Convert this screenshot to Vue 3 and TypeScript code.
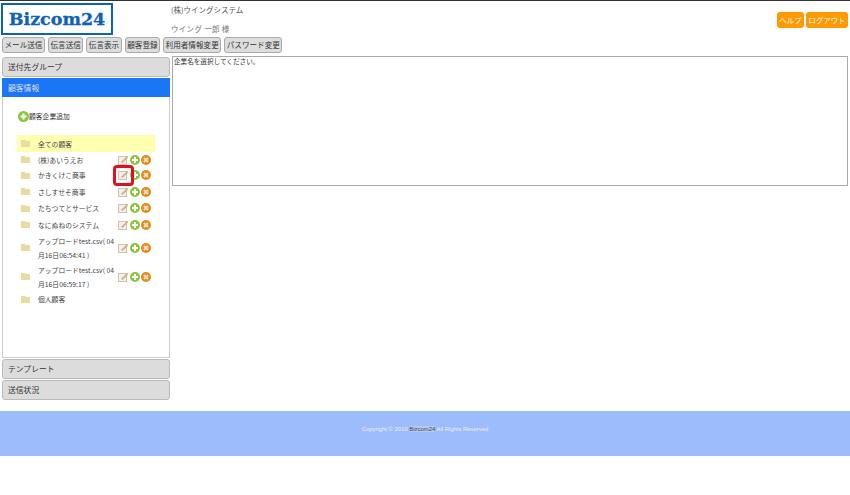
<script setup lang="ts">
interface Row { name: string; actions: boolean; h: number }
const rows: Row[] = [
  { name: '(株)あいうえお', actions: true, h: 15 },
  { name: 'かきくけこ商事', actions: true, h: 16 },
  { name: 'さしすせそ商事', actions: true, h: 17 },
  { name: 'たちつてとサービス', actions: true, h: 16 },
  { name: 'なにぬねのシステム', actions: true, h: 17 },
  { name: 'アップロードtest.csv( 04\n月16日06:54:41 )', actions: true, h: 29 },
  { name: 'アップロードtest.csv( 04\n月16日06:59:17 )', actions: true, h: 29 },
  { name: '個人顧客', actions: false, h: 16 },
]
const nav = ['メール送信', '伝言送信', '伝言表示', '顧客登録', '利用者情報変更', 'パスワード変更']
</script>

<template>
  <div class="page">
    <header class="top">
      <div class="logo">Bizcom24</div>
      <div class="user">
        <div class="company">(株)ウイングシステム</div>
        <div class="person">ウイング 一郎 様</div>
      </div>
      <div class="help">
        <span class="orange">ヘルプ</span>
        <span class="orange">ログアウト</span>
      </div>
    </header>
    <nav class="nav">
      <span v-for="n in nav" :key="n" class="navbtn">{{ n }}</span>
    </nav>
    <main class="main">
      <aside class="side">
        <div class="acc">送付先グループ</div>
        <div class="acc active">顧客情報</div>
        <div class="panel">
          <div class="add">
            <svg width="11" height="11" viewBox="0 0 11 11"><circle cx="5.5" cy="5.5" r="5.5" fill="#8cc63f"/><path d="M5.5 2.5v6M2.5 5.5h6" stroke="#fff" stroke-width="2"/></svg>
            <span>顧客企業追加</span>
          </div>
          <div class="all">
            <svg class="folder" width="9" height="7" viewBox="0 0 9 7"><path d="M0 0h4l1 1h4v6H0z" fill="#e8dca0"/></svg>
            <span class="name">全ての顧客</span>
          </div>
          <div v-for="(r, i) in rows" :key="r.name" class="row" :style="{ height: r.h + 'px' }">
            <svg class="folder" width="9" height="7" viewBox="0 0 9 7"><path d="M0 0h4l1 1h4v6H0z" fill="#e8dca0"/></svg>
            <span class="name">{{ r.name }}</span>
            <span v-if="r.actions" class="actions">
              <span class="edit-wrap">
                <svg width="11" height="10" viewBox="0 0 11 10"><rect x=".5" y="1.5" width="8" height="8" fill="#f4f1ea" stroke="#c9c4b8"/><path d="M3 7l6-6 1.5 1-6 6z" fill="#d9ae76"/></svg>
                <span v-if="i === 1" class="mark"></span>
              </span>
              <svg width="10" height="10" viewBox="0 0 10 10"><circle cx="5" cy="5" r="5" fill="#8cc63f"/><path d="M5 2v6M2 5h6" stroke="#fff" stroke-width="2"/></svg>
              <svg width="10" height="10" viewBox="0 0 10 10"><circle cx="5" cy="5" r="5" fill="#e58a1f"/><path d="M3 3l4 4M7 3l-4 4" stroke="#fbe3c0" stroke-width="2"/></svg>
            </span>
          </div>
        </div>
        <div class="acc">テンプレート</div>
        <div class="acc last">送信状況</div>
      </aside>
      <section class="content">企業名を選択してください。</section>
    </main>
    <footer class="foot">
      <span>Copyright © 2010 <span class="brand">Bizcom24</span> All Rights Reserved</span>
    </footer>
  </div>
</template>

<style>
html, body { margin: 0; background: #fff; }
</style>

<style scoped>
.page {
  width: 850px;
  height: 495px;
  overflow: hidden;
  font-family: "Noto Sans CJK JP", "Liberation Sans", sans-serif;
  font-size: 8px;
  color: #333;
  border-top: 1px solid #333;
  box-sizing: border-box;
}
.top { display: flex; height: 36px; }
.logo {
  margin: 2px 0 0 1px;
  width: 112px;
  height: 32px;
  box-sizing: border-box;
  border: 2px solid #0d62b8;
  color: #0d62b8;
  font-family: "DejaVu Serif", serif;
  font-weight: 700;
  font-size: 17.5px;
  line-height: 28px;
  text-align: center;
  -webkit-text-stroke: 0.3px #0d62b8;
}
.user { margin-left: 58px; padding-top: 3px; flex: 1; color: #555; }
.company { height: 19px; line-height: 11px; font-size: 7.5px; }
.person { line-height: 11px; font-size: 7.5px; color: #777; letter-spacing: .3px; }
.help { display: flex; gap: 2px; margin: 11px 2px 0 0; }
.orange {
  height: 16px;
  padding: 0 2.5px;
  background: #ff9900;
  color: #fff;
  border-radius: 3px;
  line-height: 16px;
  font-size: 7.4px;
}
.nav { display: flex; gap: 3px; height: 18px; padding-left: 2px; }
.navbtn {
  height: 16px;
  padding: 0 1.5px;
  background: #ddd;
  border: 1px solid #aaa;
  border-radius: 3px;
  box-sizing: border-box;
  line-height: 14px;
  font-size: 7.6px;
  color: #333;
}
.main { display: flex; padding: 1px 0 0 2px; gap: 2px; }
.side { width: 168px; margin-top: 1px; }
.acc {
  height: 20px;
  box-sizing: border-box;
  background: #dcdcdc;
  border: 1px solid #bbb;
  border-radius: 3px;
  padding-left: 5px;
  line-height: 18px;
  font-size: 7.8px;
  margin-bottom: 1px;
}
.acc.active { height: 19px; background: #1a76f5; border-color: #1a76f5; color: #dde; border-radius: 0; margin-bottom: 0; }
.acc.last { margin-bottom: 0; }
.panel {
  height: 261px;
  box-sizing: border-box;
  border: 1px solid #ccc;
  border-top: 0;
  padding: 12px 14px 0 14px;
  margin-bottom: 1px;
}
.add { display: flex; align-items: center; height: 14px; font-size: 6.8px; margin: 0 0 12px 1px; }
.all {
  display: flex;
  align-items: center;
  height: 17px;
  background: #ffffb0;
  padding-left: 4px;
  width: 138px;
  box-sizing: border-box;
}
.row { display: flex; align-items: center; padding-left: 4px; width: 134px; }
.folder { flex: none; margin-right: 8px; }
.name {
  font-size: 6.8px;
  line-height: 14px;
  width: 80px;
  white-space: pre-line;
  color: #444;
}
.actions { display: flex; align-items: center; gap: 1px; }
.edit-wrap { position: relative; display: flex; }
.mark {
  position: absolute;
  left: -5px;
  top: -5px;
  width: 15px;
  height: 15px;
  border: 3px solid #e0101c;
  border-radius: 4px;
  z-index: 1;
}
.content {
  width: 676px;
  height: 130px;
  box-sizing: border-box;
  border: 1px solid #aaa;
  font-size: 6.6px;
  line-height: 9px;
  padding-left: 1px;
}
.foot {
  margin-top: 11px;
  height: 45px;
  box-sizing: border-box;
  padding-bottom: 10px;
  background: #9dbcfb;
  color: #eef;
  font-family: "Liberation Sans", sans-serif;
  font-size: 5.9px;
  display: flex;
  align-items: center;
  justify-content: center;
}
.brand { color: #446; background: #b8c8e8; }
</style>
